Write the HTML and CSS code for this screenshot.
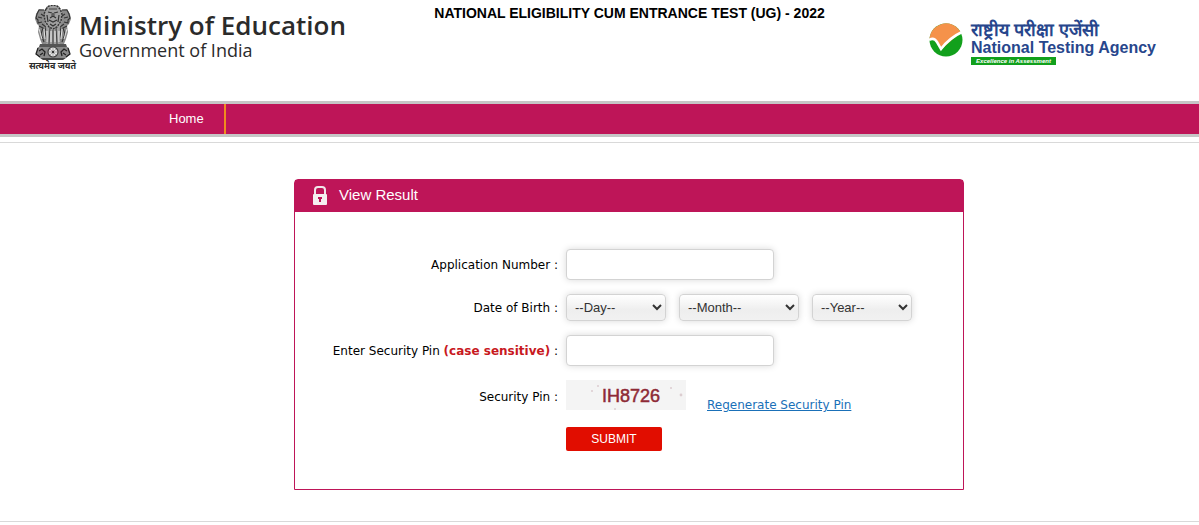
FILE: index.html
```html
<!DOCTYPE html>
<html lang="en">
<head>
  <meta charset="UTF-8">
  <meta name="viewport" content="width=device-width, initial-scale=1.0">
  <title>National Eligibility Cum Entrance Test (UG) - 2022</title>
  <link rel="stylesheet" href="styles.css">
</head>
<body>
  <header class="header">
    <div class="ministry">
      <div class="emblem">
        <svg width="36" height="56" viewBox="0 0 36 56" aria-hidden="true">
          <!-- side lions -->
          <path d="M11 5 L4 4 L1 9 L0 14 L2 19 L4 21 L3 27 L5 34 L7 39 L13 40 L15 20 Z" fill="#8a8a8a"/>
          <path d="M25 5 L32 4 L35 9 L36 14 L34 19 L32 21 L33 27 L31 34 L29 39 L23 40 L21 20 Z" fill="#8a8a8a"/>
          <path d="M9 5 L4 5 L2 9 L1 13 L3 15 L3 18 L7 17 M6 9 L9 11 M4 21 L8 23 L6 29 L9 37 M12 20 L10 26 L12 38 M3 12 L7 13 M7 19 L11 22" fill="none" stroke="#333" stroke-width="1.1"/>
          <path d="M27 5 L32 5 L34 9 L35 13 L33 15 L33 18 L29 17 M30 9 L27 11 M32 21 L28 23 L30 29 L27 37 M24 20 L26 26 L24 38 M33 12 L29 13 M29 19 L25 22" fill="none" stroke="#333" stroke-width="1.1"/>
          <!-- front lion -->
          <path d="M12 1 L18 0 L24 1 L27 7 L27 15 L25 22 L24 30 L25 40 L11 40 L12 30 L11 22 L9 15 L9 7 Z" fill="#a0a0a0"/>
          <path d="M11 4 L14 1 L18 0 L22 1 L25 4 L27 9 L26 16 L22 22 L18 24 L14 22 L10 16 L9 9 Z" fill="none" stroke="#333" stroke-width="1.4" stroke-dasharray="2 1"/>
          <path d="M13 7 L17 8 M19 8 L23 7 M18 8 V12 M15 13 L18 11 L21 13 M14 15 L18 17 L22 15 M12 10 L13 17 M24 10 L23 17 M15 19 L18 21 L21 19" fill="none" stroke="#333" stroke-width="1.2"/>
          <path d="M14 4 H22 M16 10 H17 M19 10 H20 M15 22 L14 39 M21 22 L22 39 M18 25 V39" fill="none" stroke="#444" stroke-width="1.1"/>
          <path d="M16 26 V37 M20 26 V37 M12 26 V37 M24 26 V37" stroke="#eee" stroke-width="1"/>
          <path d="M4 24 L7 34 M32 24 L29 34 M9 24 L10 34 M27 24 L26 34" stroke="#e4e4e4" stroke-width="1"/>
          <!-- abacus with the wheel -->
          <path d="M5 39 H31 L32 42 H4 Z" fill="#555"/>
          <path d="M3 42 H33 L35 49 L31 53 H5 L1 49 Z" fill="#8a8a8a"/>
          <path d="M3 43 L1 49 L5 52 M33 43 L35 49 L31 52 M4 46 L7 44 L10 47 L9 51 M5 50 L8 48 M32 46 L29 44 L26 47 L27 51 M31 50 L28 48" fill="none" stroke="#222" stroke-width="1.3"/>
          <circle cx="18" cy="47" r="5" fill="#e6e6e6" stroke="#444" stroke-width="1.2"/>
          <path d="M18 43 V51 M14 47 H22 M15 44 L21 50 M21 44 L15 50" stroke="#888" stroke-width=".6"/>
          <circle cx="18" cy="47" r="1.2" fill="#333"/>
          <path d="M5 53 H31 L28 55 H8 Z" fill="#444"/>
        </svg>
        <span class="motto" lang="hi">सत्यमेव जयते</span>
      </div>
      <div class="ministry-text">
        <div class="ministry-name">Ministry of Education</div>
        <div class="ministry-gov">Government of India</div>
      </div>
    </div>

    <h1 class="exam-title">NATIONAL ELIGIBILITY CUM ENTRANCE TEST (UG) - 2022</h1>

    <div class="nta">
      <svg width="35" height="35" viewBox="0 0 35 35" aria-hidden="true">
        <circle cx="17" cy="18" r="16.5" fill="#12a01c"/>
        <path d="M0.5 18 A16.5 16.5 0 0 1 31.5 10 L12 28 L8 20 Q5 16 0.5 18 Z" fill="#f5924a"/>
        <path d="M0 18 Q5 15 8 20 L12 27 Q20 16 35 9" fill="none" stroke="#fff" stroke-width="2.5"/>
      </svg>
      <div class="nta-text">
        <span class="nta-hindi" lang="hi">राष्ट्रीय परीक्षा एजेंसी</span>
        <span class="nta-name">National Testing Agency</span>
        <span class="nta-tag">Excellence in Assessment</span>
      </div>
    </div>
  </header>

  <nav class="navbar">
    <a class="nav-link" href="#">Home</a>
  </nav>

  <main class="content">
    <section class="panel">
      <h2 class="panel-head">
        <svg width="14" height="19" viewBox="0 0 14 19" aria-hidden="true">
          <path d="M2 9 V4 Q2 1 5 1 H9 Q12 1 12 4 V9" fill="none" stroke="#f1e6ea" stroke-width="2"/>
          <rect x="0" y="8" width="14" height="11" rx="1" fill="#f5eef0"/>
          <path d="M5 11 H9 V13 H8 V16 H6 V13 H5 Z" fill="#be1558"/>
        </svg>
        View Result
      </h2>
      <form class="result-form">
        <label for="appno">Application Number :</label>
        <div class="field"><input class="text-input" type="text" id="appno"></div>

        <label for="day">Date of Birth :</label>
        <div class="field dob">
          <select class="select" id="day" aria-label="Day"><option>--Day--</option></select>
          <select class="select select-month" aria-label="Month"><option>--Month--</option></select>
          <select class="select" aria-label="Year"><option>--Year--</option></select>
        </div>

        <label for="pin">Enter Security Pin <b class="case">(case sensitive)</b> :</label>
        <div class="field"><input class="text-input" type="text" id="pin"></div>

        <span class="label">Security Pin :</span>
        <div class="field pin-row">
          <svg class="captcha" width="120" height="30" viewBox="0 0 120 30">
            <rect width="120" height="30" fill="#f4f4f4"/>
            <g fill="#dccdd0">
              <circle cx="26" cy="11" r="1"/>
              <circle cx="32" cy="6" r="1"/>
              <circle cx="105" cy="8" r="1"/>
              <circle cx="115" cy="15" r="1.4"/>
              <circle cx="49" cy="29" r="1"/>
            </g>
            <text class="captcha-text" x="36" y="22">IH8726</text>
          </svg>
          <a class="regen" href="#">Regenerate Security Pin</a>
        </div>

        <button class="submit" type="button">SUBMIT</button>
      </form>
    </section>
  </main>

  <footer class="footer"></footer>
</body>
</html>
```
FILE: styles.css
```css
* {
  box-sizing: border-box;
}

body {
  margin: 0;
  background: #fff;
  color: #000;
  font-family: "DejaVu Sans", Verdana, sans-serif;
  font-size: 12px;
}

.header {
  display: flex;
  justify-content: space-between;
  align-items: flex-start;
  height: 101px;
  padding: 5px 43px 0 30px;
}

.ministry {
  display: flex;
  gap: 4px;
  font-family: "Open Sans", "Noto Sans", sans-serif;
  color: #2b2b2b;
}

.emblem {
  display: flex;
  flex-direction: column;
  align-items: center;
  width: 45px;
}

.motto {
  font-size: 9px;
  line-height: 10px;
  font-weight: bold;
  white-space: nowrap;
}

.ministry-text {
  padding-top: 5px;
}

.ministry-name {
  font-size: 26px;
  line-height: 30px;
  font-weight: 600;
}

.ministry-gov {
  font-size: 18px;
  line-height: 20px;
}

.exam-title {
  margin: 0;
  padding-right: 16px;
  font: bold 14px/16px "Liberation Sans", Arial, sans-serif;
}

.nta {
  display: flex;
  gap: 7px;
  padding-top: 17px;
  font-family: "Liberation Sans", Arial, sans-serif;
  font-weight: bold;
}

.nta-text {
  display: flex;
  flex-direction: column;
  align-items: flex-start;
  color: #27468c;
}

.nta-hindi {
  font-size: 18px;
  line-height: 17px;
}

.nta-name {
  font-size: 16px;
  line-height: 18px;
}

.nta-tag {
  padding: 0 5px;
  background: #12a01c;
  color: #fff;
  font-size: 6px;
  line-height: 8px;
  font-style: italic;
}

.navbar {
  display: flex;
  height: 36px;
  padding-left: 148px;
  background: #be1558;
  border-top: 3px solid #c6c6c6;
  border-bottom: 3px solid #c6c6c6;
}

.nav-link {
  padding: 0 20px 0 21px;
  border-right: 2px solid #f08c1e;
  color: #fff;
  font: 13px/29px "Liberation Sans", Arial, sans-serif;
  text-decoration: none;
}

.content {
  margin-top: 5px;
  padding: 36px 16px 31px 75px;
  border-top: 1px solid #d9d9d9;
}

.panel {
  max-width: 670px;
  margin: 0 auto;
  border: 1px solid #be1558;
  border-radius: 4px 4px 0 0;
}

.panel-head {
  display: flex;
  align-items: center;
  gap: 12px;
  height: 32px;
  margin: 0;
  padding: 0 0 2px 18px;
  background: #be1558;
  color: #fff;
  font: 15px/30px "Liberation Sans", Arial, sans-serif;
}

.result-form {
  display: grid;
  grid-template-columns: 263px 1fr;
  column-gap: 8px;
  row-gap: 14px;
  align-items: center;
  padding: 37px 0 38px;
}

.result-form label,
.label {
  text-align: right;
  white-space: nowrap;
}

.label {
  padding-top: 4px;
}

.case {
  color: #c8191e;
}

.field {
  display: flex;
}

.text-input,
.select {
  border: 1px solid #d3d3d3;
  border-radius: 4px;
  box-shadow: 0 0 7px rgba(0, 0, 0, 0.15);
}

.text-input {
  width: 208px;
  height: 31px;
  padding: 4px 8px;
  background: #fff;
}

.dob {
  gap: 13px;
}

.select {
  width: 100px;
  height: 27px;
  padding: 0 0 0 4px;
  background: linear-gradient(#fff, #eee 60%, #f1f1f1);
  color: #333;
  font: 13px "Liberation Sans", Arial, sans-serif;
}

.select-month {
  width: 120px;
}

.pin-row {
  gap: 21px;
  align-items: flex-end;
}

.captcha-text {
  fill: #8e2a36;
  stroke: #8e2a36;
  stroke-width: 0.5;
  font: 18px "Liberation Sans Narrow", "Liberation Sans", Arial, sans-serif;
}

.regen {
  color: #1a70b8;
  line-height: 9px;
}

.submit {
  grid-column: 2;
  width: 96px;
  height: 24px;
  margin-top: 3px;
  padding: 0;
  background: #e10d00;
  border: 0;
  border-radius: 2px;
  color: #fff;
  font: 12px "Liberation Sans", Arial, sans-serif;
}

.footer {
  border-top: 1px solid #d9d9d9;
}
```
